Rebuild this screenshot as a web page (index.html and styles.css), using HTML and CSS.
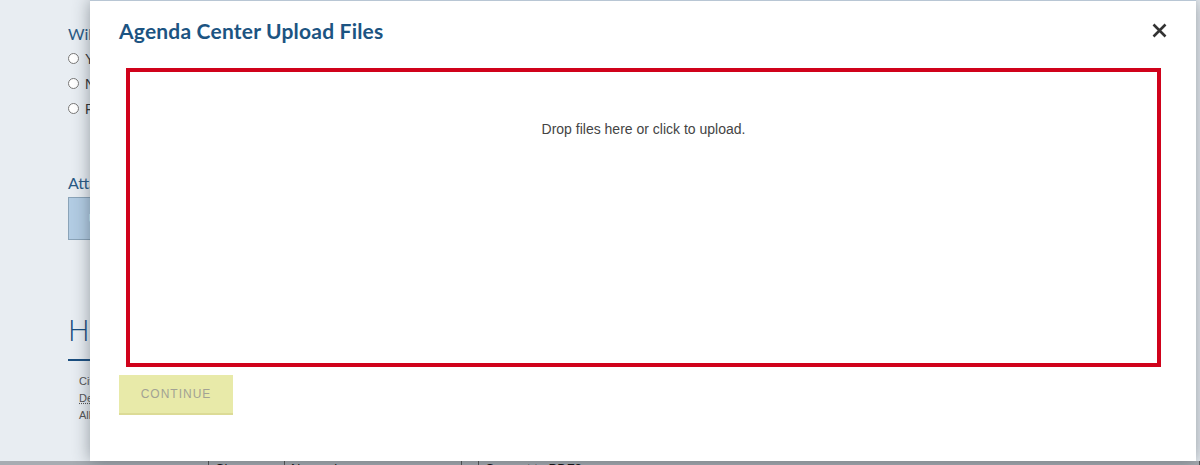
FILE: index.html
```html
<!DOCTYPE html>
<html>
<head>
<meta charset="utf-8">
<link rel="stylesheet" href="styles.css">
</head>
<body>
<div class="page">
  <div class="form">
    <div class="q-label">Will this item be considered?</div>
    <label class="radio"><input type="radio" name="q"> Yes</label>
    <label class="radio"><input type="radio" name="q"> No</label>
    <label class="radio"><input type="radio" name="q"> Pending</label>
    <div class="att-label">Attachments</div>
    <div class="att-btn">Upload</div>
    <h2 class="heading">Help</h2>
    <div class="small">
      <div>City Clerk</div>
      <div class="dotted">Department</div>
      <div>All</div>
    </div>
  </div>
  <div class="filebar">
    <span class="cell c1"></span>
    <span class="cell c2">Choose File</span>
    <span class="cell c3">No … chosen</span>
    <span class="cell c4"></span>
    <span class="cell c5">Convert to PDF?</span>
  </div>
</div>

<div class="modal">
  <div class="modal-head">
    <h1 class="modal-title">Agenda Center Upload Files</h1>
    <svg class="close" width="15" height="15" viewBox="0 0 15 15" aria-label="Close">
      <path d="M1.5 1.5 L13.5 13.5 M13.5 1.5 L1.5 13.5" stroke="#333" stroke-width="2.6" stroke-linecap="butt" fill="none"/>
    </svg>
  </div>
  <div class="dropzone">
    <div class="dz-msg">Drop files here or click to upload.</div>
  </div>
  <button class="continue" disabled>CONTINUE</button>
</div>
</body>
</html>
```

FILE: styles.css
```css
html, body {
  margin: 0;
  padding: 0;
}
body {
  background: #e8edf2;
  width: 1200px;
  height: 465px;
  overflow: hidden;
  font-family: "Liberation Sans", Arial, sans-serif;
  position: relative;
}
.page {
  padding: 24px 0 0 68px;
}
.form {
  width: 400px;
  white-space: nowrap;
}
.q-label {
  font-family: Lato, "Open Sans", sans-serif;
  font-size: 16px;
  color: #2a5a85;
  height: 22px;
}
.radio {
  display: flex;
  align-items: center;
  height: 25px;
  font-size: 14px;
  color: #333;
}
.radio input {
  margin: 0 6px 0 0;
  width: 11px;
  height: 11px;
}
.att-label {
  margin-top: 52px;
  font-family: Lato, "Open Sans", sans-serif;
  font-size: 16px;
  color: #2a5a85;
  height: 19px;
}
.att-btn {
  margin-top: 5px;
  width: 80px;
  height: 41px;
  background: #b2cce3;
  border: 1px solid #8aa3b8;
  color: #fff;
  font-size: 13px;
  line-height: 41px;
  text-align: center;
}
.heading {
  margin: 70px 0 0 0;
  font-family: "Open Sans", sans-serif;
  font-weight: 300;
  font-size: 30px;
  color: #1b4f80;
  line-height: 40px;
  padding-bottom: 9px;
  border-bottom: 2px solid #1b4f80;
  width: 300px;
}
.small {
  margin-top: 12px;
  padding-left: 11px;
  font-size: 11px;
  color: #555;
  line-height: 17px;
}
.dotted {
  text-decoration: underline dotted;
}
.filebar {
  position: absolute;
  left: 0;
  top: 461px;
  width: 1200px;
  height: 20px;
  background: #a7acb2;
  display: flex;
  font-size: 13px;
  color: #111;
}
.cell { display: block; border-right: 1px solid #555; padding-left: 6px; }
.c1 { width: 202px; }
.c2 { width: 69px; }
.c3 { width: 170px; }
.c4 { width: 10px; }
.c5 { flex: 1; }

.modal {
  position: absolute;
  left: 90px;
  top: 0;
  width: 1106px;
  height: 461px;
  background: #fff;
  border-top: 1px solid #b8c6d4;
  box-sizing: border-box;
  box-shadow: 0 0 16px rgba(40, 50, 60, 0.45);
  padding: 0 29px;
}
.modal-head {
  display: flex;
  justify-content: space-between;
  align-items: center;
  height: 59px;
}
.modal-title {
  margin: 0;
  font-family: Lato, "Open Sans", sans-serif;
  font-weight: 700;
  font-size: 21px;
  color: #1c5482;
  letter-spacing: 0.2px;
}
.close {
  display: block;
  margin-right: 0;
}
.dropzone {
  margin: 8px 0 0 7px;
  width: 1035px;
  height: 299px;
  border: 4px solid #d0021b;
  box-sizing: border-box;
  display: flex;
  justify-content: center;
}
.dz-msg {
  margin-top: 49px;
  font-size: 14px;
  color: #444;
}
.continue {
  display: block;
  margin-top: 8px;
  width: 114px;
  height: 40px;
  border: none;
  border-bottom: 2px solid #dcdb96;
  background: #e8eaa9;
  color: #a2a294;
  font-family: "Liberation Sans", Arial, sans-serif;
  font-size: 12px;
  letter-spacing: 1px;
  padding: 0;
}
```
